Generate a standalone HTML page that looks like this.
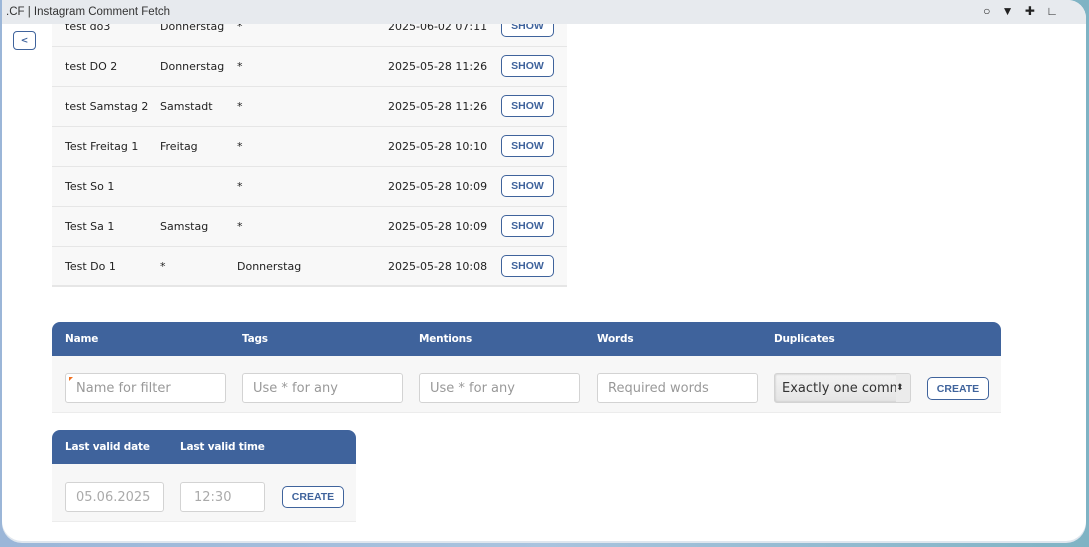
<!DOCTYPE html>
<html><head><meta charset="utf-8"><style>
*{box-sizing:border-box;margin:0;padding:0}
body{width:1089px;height:547px;overflow:hidden;background:linear-gradient(90deg,#9bb6d8,#a9c3de 50%,#7fb3c4);font-family:"DejaVu Sans","Liberation Sans",sans-serif;font-size:11px;color:#222;position:relative}
.win{position:absolute;left:2px;top:0;width:1084px;height:541px;background:#fff;border-radius:0 18px 20px 20px;overflow:hidden;box-shadow:0 2px 0 #dfe6ee}
.title{position:absolute;left:0;top:0;width:100%;height:24px;background:#e7eaee;color:#333;padding:6px 0 0 4px;font-family:"Liberation Sans",sans-serif;font-size:11.5px}
.title .ic{position:absolute;right:24px;top:4px;font-size:12px;color:#222;letter-spacing:4px}
.back{position:absolute;left:11px;top:31px;width:23px;height:19px;border:1px solid #3f639c;border-radius:4px;color:#3f639c;font-weight:bold;font-size:9px;display:flex;align-items:center;justify-content:center}
.rows{position:absolute;left:50px;top:24px;width:515px}
.row{height:40px;background:#f8f8f8;border-bottom:1px solid #e6e6e6;position:relative}
.row span{position:absolute;top:13px}
.btn{position:absolute;border:1px solid #3f639c;border-radius:5px;color:#3f639c;font-weight:bold;font-size:10.5px;background:#fff;font-family:"Liberation Sans",sans-serif;display:flex;align-items:center;justify-content:center}
.row .btn{left:449px;top:8px;width:53px;height:22px}
.hdr{position:absolute;background:#3f639c;border-radius:8px 8px 0 0;color:#fff;font-weight:bold;font-size:10.5px;letter-spacing:-0.2px}
.hdr span{position:absolute;top:11px}
.bd{position:absolute;background:#f7f7f7;border-bottom:1px solid #ececec}
.in{position:absolute;height:30px;border:1px solid #d3d3d3;border-radius:3px;background:#fff;color:#999;padding:7px 10px;font-family:"DejaVu Sans",sans-serif;font-size:13px;white-space:nowrap;overflow:hidden}
</style></head><body>
<div class="win">
<div class="rows" style="top:7px">
<div class="row"><span style="left:13px">test do3</span><span style="left:108px">Donnerstag</span><span style="left:185px">*</span><span style="left:336px">2025-06-02 07:11</span><div class="btn">SHOW</div></div>
<div class="row"><span style="left:13px">test DO 2</span><span style="left:108px">Donnerstag</span><span style="left:185px">*</span><span style="left:336px">2025-05-28 11:26</span><div class="btn">SHOW</div></div>
<div class="row"><span style="left:13px">test Samstag 2</span><span style="left:108px">Samstadt</span><span style="left:185px">*</span><span style="left:336px">2025-05-28 11:26</span><div class="btn">SHOW</div></div>
<div class="row"><span style="left:13px">Test Freitag 1</span><span style="left:108px">Freitag</span><span style="left:185px">*</span><span style="left:336px">2025-05-28 10:10</span><div class="btn">SHOW</div></div>
<div class="row"><span style="left:13px">Test So 1</span><span style="left:185px">*</span><span style="left:336px">2025-05-28 10:09</span><div class="btn">SHOW</div></div>
<div class="row"><span style="left:13px">Test Sa 1</span><span style="left:108px">Samstag</span><span style="left:185px">*</span><span style="left:336px">2025-05-28 10:09</span><div class="btn">SHOW</div></div>
<div class="row" style="border-bottom:2px solid #e6e6e6"><span style="left:13px">Test Do 1</span><span style="left:108px">*</span><span style="left:185px">Donnerstag</span><span style="left:336px">2025-05-28 10:08</span><div class="btn">SHOW</div></div>
</div>
<div class="title">.CF | Instagram Comment Fetch<span class="ic">○ ▼ ✚ ∟</span></div>
<div class="back">&lt;</div>

<div class="hdr" style="left:50px;top:322px;width:949px;height:34px"><span style="left:13px">Name</span><span style="left:190px">Tags</span><span style="left:367px">Mentions</span><span style="left:545px">Words</span><span style="left:722px">Duplicates</span></div>
<div class="bd" style="left:50px;top:356px;width:949px;height:57px"></div>
<div class="in" style="left:63px;top:373px;width:161px">Name for filter<div style="position:absolute;left:3px;top:3px;width:0;height:0;border-top:4px solid #f07020;border-right:4px solid transparent"></div></div>
<div class="in" style="left:240px;top:373px;width:161px">Use * for any</div>
<div class="in" style="left:417px;top:373px;width:161px">Use * for any</div>
<div class="in" style="left:595px;top:373px;width:161px">Required words</div>
<div class="in" style="left:772px;top:373px;width:137px;background:linear-gradient(#f4f4f4,#e4e4e4);color:#333;padding-left:7px;box-shadow:inset 0 0 2px #bbb">Exactly one comm<span style="position:absolute;right:0;top:0;width:14px;height:28px;font-size:9px;line-height:28px;background:#ebebeb">⬍</span></div>
<div class="btn" style="left:925px;top:377px;width:62px;height:23px">CREATE</div>

<div class="hdr" style="left:50px;top:430px;width:304px;height:34px"><span style="left:13px">Last valid date</span><span style="left:128px">Last valid time</span></div>
<div class="bd" style="left:50px;top:464px;width:304px;height:58px"></div>
<div class="in" style="left:63px;top:482px;width:99px;color:#aaa">05.06.2025</div>
<div class="in" style="left:178px;top:482px;width:85px;color:#aaa;padding-left:13px">12:30</div>
<div class="btn" style="left:280px;top:486px;width:62px;height:22px">CREATE</div>
</div>
</body></html>
